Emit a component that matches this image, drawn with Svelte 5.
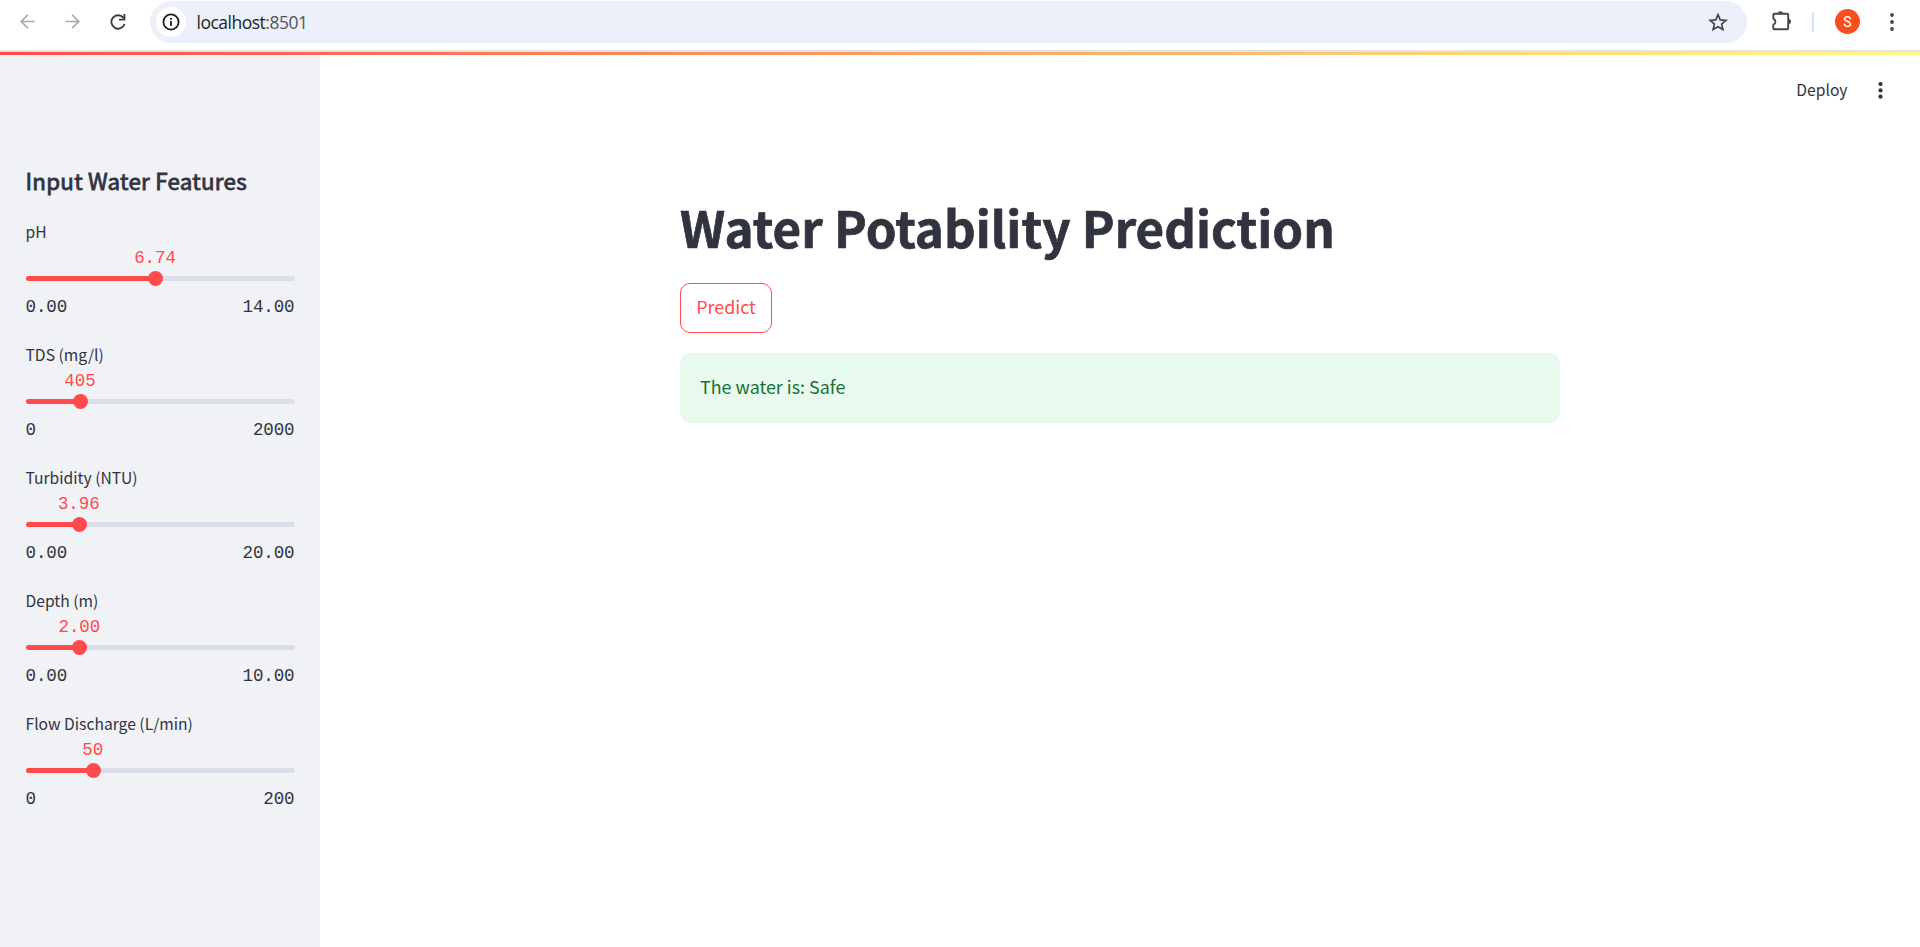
<script>
  const sliders = [
    { label: 'pH', value: '6.74', min: '0.00', max: '14.00', pct: 48.14 },
    { label: 'TDS (mg/l)', value: '405', min: '0', max: '2000', pct: 20.25 },
    { label: 'Turbidity (NTU)', value: '3.96', min: '0.00', max: '20.00', pct: 19.8 },
    { label: 'Depth (m)', value: '2.00', min: '0.00', max: '10.00', pct: 20 },
    { label: 'Flow Discharge (L/min)', value: '50', min: '0', max: '200', pct: 25 }
  ];
</script>

<div class="page">
  <header class="browser">
    <nav class="nav">
      <svg width="15" height="15" viewBox="0 0 15 15" fill="none" stroke="#a9a9a9" stroke-width="1.7"><path d="M14.7 7.5H1.4M7.9.8 1.2 7.5l6.7 6.7" /></svg>
      <svg width="15" height="15" viewBox="0 0 15 15" fill="none" stroke="#a9a9a9" stroke-width="1.7"><path d="M.3 7.5h13.3M7.1.8l6.7 6.7-6.7 6.7" /></svg>
      <svg width="16" height="16" viewBox="0 0 16 16" fill="none" stroke="#3c3c3c" stroke-width="1.9"><path d="M13.4 3.9A6.7 6.7 0 1 0 14.5 9.9M14.4 0v5.6H9" /></svg>
    </nav>
    <div class="omnibox">
      <span class="info">
        <svg width="18" height="18" viewBox="0 0 18 18" fill="none" stroke="#1f1f1f"><circle cx="9" cy="9" r="7.6" stroke-width="1.8" /><path d="M9 8v5M9 5v1.8" stroke-width="1.8" /></svg>
      </span>
      <span class="url">localhost<i>:8501</i></span>
      <svg class="star" width="20" height="19" viewBox="0 0 20 19" fill="none" stroke="#444746" stroke-width="1.7"><path d="m10 1.7 2.2 5.2 5.7.5-4.3 3.7 1.3 5.5-4.9-2.9-4.9 2.9 1.3-5.5-4.3-3.7 5.7-.5z" /></svg>
    </div>
    <svg class="puzzle" width="22" height="22" viewBox="0 0 22 22"><path d="M3.3 3.7h12.9q1 0 1 1v13.6q0 1-1 1H3.3q-1 0-1-1v-3.6a3.2 3.2 0 0 0 0-6V4.7q0-1 1-1z" fill="none" stroke="#444746" stroke-width="1.9" stroke-linejoin="round" /><path d="M6.8 3.2a2.8 2.7 0 0 1 5.4 0zM17.8 8.7a2.8 2.8 0 0 1 0 5.5z" fill="#444746" /></svg>
    <span class="divider"></span>
    <span class="avatar">S</span>
    <svg class="kebab" width="4" height="18" viewBox="0 0 4 18" fill="#444746"><circle cx="2" cy="2" r="1.9" /><circle cx="2" cy="9" r="1.9" /><circle cx="2" cy="16" r="1.9" /></svg>
  </header>
  <div class="decoration"></div>

  <div class="app">
    <aside>
      <h2>Input Water Features</h2>
      {#each sliders as s}
        <section class="slider">
          <div class="label">{s.label}</div>
          <div class="value"><span style="margin-left: {s.pct}%">{s.value}</span></div>
          <div class="track">
            <div class="fill" style="width: {s.pct}%"></div>
            <div class="thumb"></div>
          </div>
          <div class="range"><span>{s.min}</span><span>{s.max}</span></div>
        </section>
      {/each}
    </aside>
    <main>
      <div class="toolbar">
        <span class="deploy">Deploy</span>
        <svg width="5" height="17" viewBox="0 0 5 17" fill="#31333f"><circle cx="2.5" cy="2.1" r="2.1" /><circle cx="2.5" cy="8.4" r="2.1" /><circle cx="2.5" cy="14.7" r="2.1" /></svg>
      </div>
      <div class="content">
        <h1>Water Potability Prediction</h1>
        <button>Predict</button>
        <div class="alert"><span>The water is: Safe</span></div>
      </div>
    </main>
  </div>
</div>

<style>
  :global(body) { margin: 0; background: #fff; }
  .page {
    height: 947px;
    display: flex;
    flex-direction: column;
    overflow: hidden;
    color: #31333f;
    font-family: "Noto Sans CJK SC", "Noto Sans", sans-serif;
  }
  svg { display: block; flex: none; }
  .browser {
    box-sizing: border-box;
    height: 52px;
    flex: none;
    display: flex;
    align-items: flex-start;
    padding-top: 1px;
    border-bottom: 2px solid #e1e3e1;
    background: #fff;
  }
  .nav { width: 130px; height: 41px; padding-left: 20px; display: flex; align-items: center; gap: 30px; }
  .omnibox { width: 1597px; height: 42px; border-radius: 21px; background: #ebf0fa; display: flex; align-items: center; }
  .info { width: 30px; height: 30px; margin-left: 6px; border-radius: 50%; background: #fff; display: flex; align-items: center; justify-content: center; }
  .url { margin-left: 10.5px; font: 17.5px/24px "Open Sans", sans-serif; letter-spacing: -0.5px; color: #1f1f1f; }
  .url i { font-style: normal; color: #53565a; }
  .star { margin: 0 19px 0 auto; }
  .puzzle { margin: 9px 0 0 24px; }
  .divider { width: 2px; height: 20px; margin: 11px 0 0 19px; background: #d3e3fd; }
  .avatar { width: 25px; height: 25px; margin: 8px 0 0 21px; border-radius: 50%; background: #f8501c; color: #fff; text-align: center; font: 14px/26px Roboto, sans-serif; }
  .kebab { margin: 12px 0 0 30px; }
  .decoration { height: 3px; flex: none; background: linear-gradient(90deg, #ff4b4b, #fffd80); }
  .app { flex: 1; display: flex; min-height: 0; }
  aside { box-sizing: border-box; width: 320px; padding: 105px 25px 0 26px; background: #f0f2f6; }
  h2 { margin: 0 0 18px -0.5px; font-size: 22.4px; line-height: 40px; font-weight: 400; -webkit-text-stroke: 0.8px #31333f; letter-spacing: 0.24px; white-space: nowrap; }
  .slider { height: 123px; }
  .label { margin-left: -0.5px; font-size: 15.65px; line-height: 28px; }
  .value, .range { font-family: "Liberation Mono", monospace; font-size: 17.5px; letter-spacing: -0.1px; }
  .value { height: 22px; line-height: 25px; color: #ff4b4b; }
  .value span { display: inline-block; transform: translateX(calc(-50% - 0.5px)); }
  .track { height: 5px; margin-top: 8px; border-radius: 3px; background: #dadee9; display: flex; align-items: center; }
  .fill { height: 5px; border-radius: 3px 0 0 3px; background: #ff4b4b; }
  .thumb { width: 15px; height: 15px; margin-left: -7.5px; border-radius: 50%; background: #ff4b4b; flex: none; }
  .range { display: flex; justify-content: space-between; margin: 14px 0.5px 0 -0.5px; line-height: 24px; }
  main { flex: 1; }
  .toolbar { height: 70px; display: flex; justify-content: flex-end; align-items: center; gap: 30.5px; padding-right: 37px; }
  .deploy { font-size: 15.65px; line-height: 24px; }
  .content { width: 880px; margin: 69px 0 0 360px; }
  h1 { margin: 0; font-size: 49.3px; line-height: 66px; height: 89px; font-weight: 700; -webkit-text-stroke: 0.7px #31333f; letter-spacing: 0.04px; white-space: nowrap; }
  button { box-sizing: border-box; display: block; width: 92px; height: 50px; padding: 0 0 5px; border: 1px solid #ff4b4b; border-radius: 10px; background: #fff; color: #ff4b4b; font-family: inherit; font-size: 17.9px; }
  .alert { box-sizing: border-box; height: 70px; margin-top: 20px; padding: 0 20px 5px; border-radius: 10px; background: #e8f9ee; color: #177233; font-size: 17.9px; display: flex; align-items: center; }
</style>
